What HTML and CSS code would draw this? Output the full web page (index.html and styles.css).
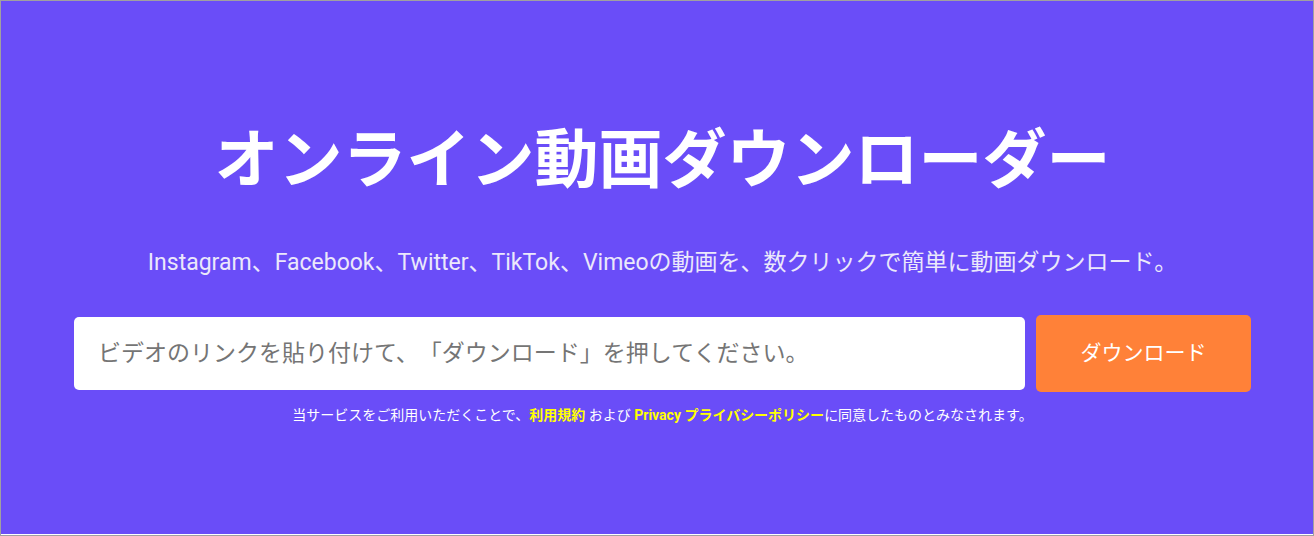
FILE: index.html
```html
<!DOCTYPE html>
<html lang="ja">
<head>
<meta charset="UTF-8">
<meta name="viewport" content="width=device-width, initial-scale=1.0">
<link rel="stylesheet" href="styles.css">
<title>オンライン動画ダウンローダー</title>
</head>
<body>
<main class="hero">
    <h1>オンライン動画ダウンローダー</h1>
    <p class="subtitle">Instagram、Facebook、Twitter、TikTok、Vimeoの動画を、数クリックで簡単に動画ダウンロード。</p>
    <form class="download-form">
        <input type="text" id="videoUrl" aria-label="ビデオのリンク" placeholder="ビデオのリンクを貼り付けて、「ダウンロード」を押してください。">
        <button type="submit">ダウンロード</button>
    </form>
    <p class="terms">当サービスをご利用いただくことで、<a href="#">利用規約</a> および <a href="#">Privacy プライバシーポリシー</a>に同意したものとみなされます。</p>
</main>
</body>
</html>
```

FILE: styles.css
```css
* {
    box-sizing: border-box;
}

body {
    display: flex;
    min-height: 100vh;
    margin: 0;
    border: 1px solid #a0a0a0;
    font-family: Roboto, "Noto Sans CJK JP", sans-serif;
    background-color: #6a4df8;
    color: #ffffff;
    text-spacing-trim: space-all;
}

.hero {
    flex: 1;
    padding: 114px 62px 96px 73px;
    border-bottom: 1px solid #ffffff;
    text-align: center;
}

h1 {
    margin: 0 0 40px;
    font-size: 64px;
    line-height: 92px;
    font-weight: bold;
}

.subtitle {
    margin: 0 0 36px;
    font-size: 23px;
    line-height: 32px;
    color: #ebe8fb;
}

.download-form {
    display: flex;
    align-items: center;
    gap: 11px;
}

.download-form input {
    flex: 1;
    min-width: 0;
    height: 73px;
    padding: 0 24px;
    border: none;
    border-radius: 5px;
    background-color: #ffffff;
    font-family: inherit;
    font-size: 23px;
    color: #333333;
    text-spacing-trim: space-all;
}

.download-form input::placeholder {
    color: #757575;
}

.download-form button {
    width: 215px;
    height: 77px;
    padding: 0 0 6px;
    border: none;
    border-radius: 5px;
    background-color: #ff8138;
    color: #ffffff;
    font-family: inherit;
    font-size: 21px;
    cursor: pointer;
}

.terms {
    margin: 12px 0 0;
    font-size: 14px;
    line-height: 22px;
}

.terms a {
    color: #ffff00;
    font-weight: bold;
    text-decoration: none;
}
```
